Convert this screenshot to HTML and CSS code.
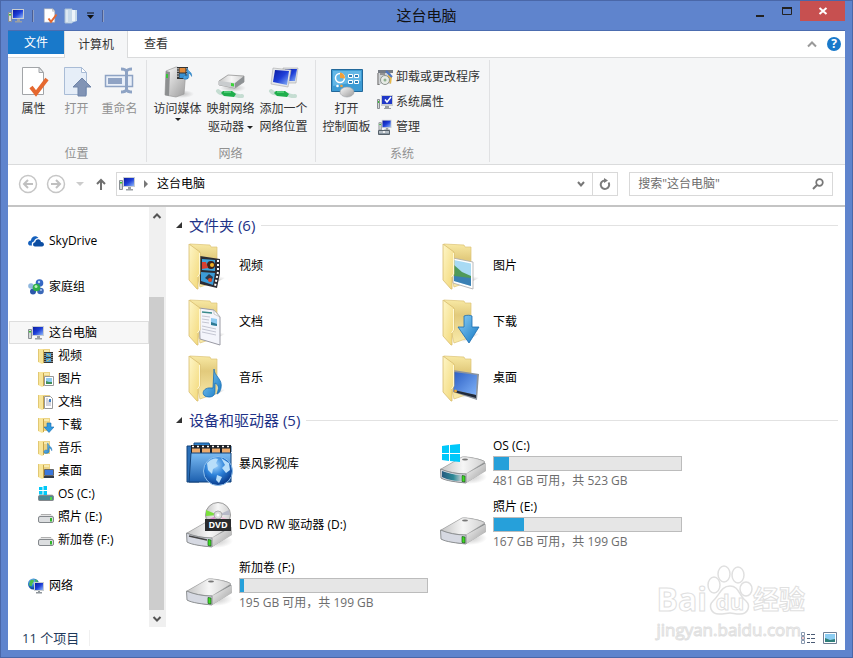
FILE: index.html
```html
<!DOCTYPE html>
<html lang="zh-CN">
  <head>
    <meta charset="UTF-8">
    <meta name="viewport" content="width=device-width, initial-scale=1.0">
    <title>这台电脑</title>
    <link rel="stylesheet" href="styles.css">
  </head>
  <body>
    <!-- shared icon shapes -->
    <svg class="defs" width="0" height="0" aria-hidden="true">
      <defs>
        <linearGradient id="gFront" x1="0" y1="0" x2="1" y2="1">
          <stop offset="0" stop-color="#fef6c8"/><stop offset="1" stop-color="#f2d775"/>
        </linearGradient>
        <linearGradient id="gBack" x1="0" y1="0" x2="0" y2="1">
          <stop offset="0" stop-color="#f8e9a4"/><stop offset=".35" stop-color="#e2ca7c"/><stop offset="1" stop-color="#f9ebab"/>
        </linearGradient>
        <linearGradient id="gBlue" x1="0" y1="0" x2="1" y2="1">
          <stop offset="0" stop-color="#8fd0f5"/><stop offset="1" stop-color="#1177c4"/>
        </linearGradient>
        <linearGradient id="gScreen" x1="0" y1="0" x2="1" y2="1">
          <stop offset="0" stop-color="#0a1aa0"/><stop offset=".5" stop-color="#1e3fd8"/><stop offset="1" stop-color="#8fb8f8"/>
        </linearGradient>
        <linearGradient id="gMetal" x1="0" y1="0" x2="1" y2="1">
          <stop offset="0" stop-color="#fafafa"/><stop offset="1" stop-color="#9b9b9b"/>
        </linearGradient>
        <linearGradient id="gTop" x1="0" y1="0" x2="1" y2="0">
          <stop offset="0" stop-color="#c4c4c4"/><stop offset=".5" stop-color="#f6f6f6"/><stop offset="1" stop-color="#cfcfcf"/>
        </linearGradient>
        <linearGradient id="gDesk" x1="0" y1="0" x2="1" y2="1">
          <stop offset="0" stop-color="#2c5fc4"/><stop offset="1" stop-color="#7fb2f8"/>
        </linearGradient>
        <linearGradient id="gBox" x1="0" y1="0" x2="0" y2="1">
          <stop offset="0" stop-color="#7bbcf4"/><stop offset="1" stop-color="#1c5fae"/>
        </linearGradient>
        <linearGradient id="gTeal" x1="0" y1="0" x2="1" y2="0">
          <stop offset="0" stop-color="#255a80"/><stop offset=".6" stop-color="#2d8a96"/><stop offset="1" stop-color="#b8c8cc"/>
        </linearGradient>
        <radialGradient id="gGlobe" cx=".4" cy=".3" r=".7">
          <stop offset="0" stop-color="#a6d8ff"/><stop offset=".5" stop-color="#2b80d8"/><stop offset="1" stop-color="#0a3b8c"/>
        </radialGradient>
        <radialGradient id="gShade">
          <stop offset="0" stop-color="#888" stop-opacity=".5"/><stop offset="1" stop-color="#888" stop-opacity="0"/>
        </radialGradient>
      </defs>

      <symbol id="pc" viewBox="0 0 16 16">
        <path d="M4 1h12v10H4z" fill="#c9ced2"/>
        <path d="M5 2h10v8H5z" fill="url(#gScreen)"/>
        <path d="M9 11h3v2h2v1.500H7V13h2z" fill="#9a9fa3"/>
        <path d="M.5 4.500h3v9h-3z" fill="#d3d6d8" stroke="#8a8f93"/>
        <path d="M1 6h2v1.500H1z" fill="#35c232"/>
      </symbol>

      <symbol id="check-page" viewBox="-3 0 32 32">
        <path d="M1.500 1.500h17l4 5v22h-21z" fill="#fff" stroke="#a2a5a8"/>
        <path d="M18 1.500v5h4.500z" fill="#e6e8ea" stroke="#a2a5a8"/>
        <path d="M10 21l5 6.500L26 13" fill="none" stroke="#e5682f" stroke-width="4"/>
      </symbol>
      <symbol id="open-page" viewBox="0 0 32 32">
        <path d="M3.500 1.500h17l5 5v22h-22z" fill="#e6eef8" stroke="#a9bcd6"/>
        <path d="M20.500 1.500v5h5z" fill="#fff" stroke="#a9bcd6"/>
        <path d="M21 12l9 9h-5v9h-8v-9h-5z" fill="#8194b5" stroke="#6f84a8"/>
      </symbol>
      <symbol id="rename" viewBox="0 0 32 32">
        <path d="M1.500 9.500h27v11h-27z" fill="#e9eff8" stroke="#8ea3c4" stroke-width="1.500"/>
        <path d="M4 12h14v6H4z" fill="#8fa3c4"/>
        <path d="M17 3c3 0 5 1 5.500 2.500C23 4 25 3 28 3M22.500 5v19M17 26c3 0 5-1 5.500-2.500 .5 1.500 2.500 2.500 5.500 2.500" fill="none" stroke="#8ea3c4" stroke-width="3"/>
      </symbol>
      <symbol id="doc-blue" viewBox="0 0 16 16">
        <path d="M1 1h7v14H1z" fill="#dce8f2" stroke="#aabfd4"/>
        <path d="M4 2h9v11l-6 2H4z" fill="#c6d9ea"/>
        <path d="M8 2h3v11H8z" fill="#edf4fa"/>
      </symbol>

      <symbol id="note" viewBox="0 0 16 16">
        <path d="M8 1c0 4 6 4 5 10-1-3-3-4-3.500-4v5c0 3-7 3.500-7 .5 0-2.500 3.500-3 5-2V1z" fill="url(#gBlue)" stroke="#1b72b8" stroke-width=".6"/>
      </symbol>
      <symbol id="media" viewBox="0 0 32 32">
        <ellipse cx="20" cy="28" rx="12" ry="4" fill="url(#gShade)"/>
        <path d="M4 5l10-4 10 2-2 25-8 3-11-2z" fill="url(#gMetal)" stroke="#9a9a9a" stroke-width=".7"/>
        <path d="M4 5l4 1-1 24-4-1z" fill="#8d8f90"/>
        <path d="M4 8h2v4H4z" fill="#38c53a"/>
        <path d="M15 1h11v12H15z" fill="#333"/>
        <path d="M17.500 2h6v4.500h-6z" fill="#e08a3a"/><path d="M17.500 7.500h6V12h-6z" fill="#3a90d0"/>
        <path d="M16 2v10M25 2v10" stroke="#fff" stroke-dasharray="1.500 1"/>
        <use href="#note" x="19" y="0" width="13" height="16"/>
      </symbol>

      <symbol id="cable" viewBox="0 0 32 32">
        <path d="M3 23c4 5 8 1 12 2s7 4 12 3" fill="none" stroke="#c5ddd2" stroke-width="4" stroke-linecap="round"/>
        <path d="M8 23h9l4 3-2 3-10-1-3-3z" fill="#1fae4c"/>
        <path d="M9 24h7" stroke="#7be59a"/>
      </symbol>
      <symbol id="net-drive" viewBox="0 0 32 32">
        <ellipse cx="18" cy="22" rx="13" ry="4" fill="url(#gShade)"/>
        <path d="M4 15l9-6 16 1v6l-9 6-16-3z" fill="url(#gTop)" stroke="#888" stroke-width=".7"/>
        <path d="M4 15l16 2v5L4 19z" fill="#c9ccce"/><path d="M20 17l9-7v6l-9 6z" fill="#8d9194"/>
        <path d="M16 17l3 .5v3l-3-.5z" fill="#39d437"/>
        <use href="#cable" width="32" height="32" y="2"/>
      </symbol>
      <symbol id="net-place" viewBox="0 0 32 32">
        <path d="M15 2l15 0-2 15-13 0z" fill="#dfe3e6" stroke="#aaa" stroke-width=".6"/>
        <path d="M17 3l12 0-2 12-10 0z" fill="url(#gScreen)"/>
        <path d="M5 2l18 2-3 17-17-3z" fill="#e4e7ea" stroke="#aaa" stroke-width=".6"/>
        <path d="M7 4l14 1-2 14-14-3z" fill="url(#gScreen)"/>
        <use href="#cable" width="32" height="32" y="2"/>
      </symbol>

      <symbol id="panel" viewBox="0 0 32 32">
        <path d="M.5 3.500h31v22H.5z" fill="#3c9bd4" stroke="#23699b"/>
        <path d="M2 5h28v10L2 20z" fill="#63b7e6"/>
        <circle cx="9" cy="12" r="4.500" fill="none" stroke="#fff" stroke-width="1.500"/>
        <path d="M9 12V6.500a5.500 5.500 0 0 1 5 6z" fill="#f2a03b"/>
        <path d="M17.500 8.500h4v3h-4zM23.500 8.500h4v3h-4zM17.500 14.500h4v3h-4zM23.500 14.500h4v3h-4z" fill="#2e7fb8" stroke="#fff"/>
        <circle cx="6.500" cy="20" r="1.300" fill="#fff"/><circle cx="10.500" cy="20" r="1.300" fill="#f2a03b"/>
        <ellipse cx="16" cy="26" rx="7" ry="5" fill="url(#gMetal)" stroke="#9aa0a5" stroke-width=".6"/>
      </symbol>
      <symbol id="uninstall" viewBox="0 0 16 16">
        <path d="M1 1h15v3H1z" fill="#777d84"/><path d="M2 4h12v11H2z" fill="#cfd2d5"/>
        <path d="M1 4v12h2M3 5h5" fill="none" stroke="#555"/>
        <path d="M11 3l4 5-1 7-3-3z" fill="#e8b94a"/><path d="M9 2l6 6" stroke="#4a74c4" stroke-width="2"/>
        <circle cx="8" cy="11" r="4.500" fill="#e7ebe6" stroke="#8d9490"/><circle cx="8" cy="11" r="1.500" fill="#8fb08f"/>
      </symbol>
      <symbol id="sysprops" viewBox="0 0 16 16">
        <path d="M4 1h12v11H4z" fill="#c9ced2"/><path d="M5 2h10v8H5z" fill="#2038c8"/>
        <path d="M8 5.500L10 8l4-5" fill="none" stroke="#fff" stroke-width="1.500"/>
        <path d="M8 12h4v2h2v1H7v-1h1z" fill="#9a9fa3"/>
        <path d="M.5 5.500h2v9h-2z" fill="#d3d6d8" stroke="#8a8f93"/><path d="M1 7h1v2H1z" fill="#35c232"/>
      </symbol>
      <symbol id="manage" viewBox="0 0 16 16">
        <use href="#pc" width="16" height="13"/>
        <path d="M1.500 11.500h11v4h-11z" fill="#8b98a3" stroke="#56616a"/>
        <path d="M2 13h10" stroke="#dfe4e8"/><path d="M6 12h2v2H6z" fill="#eee"/>
      </symbol>

      <symbol id="skydrive" viewBox="0 0 16 16">
        <path d="M1.500 12.500C-1 11 0 7.500 3 7.500 3 3.500 8 1.500 10.500 5 8 5 6.500 6.500 6 8.500c-2 .3-2.800 2.300-1.800 4z" fill="#1460bd"/>
        <path d="M7 13.500c-2.500 0-2.700-4 .2-4.200C7.500 5.500 12.500 5 13 9c3.500-.3 4 4.500 1 4.500z" fill="#0c4da2"/>
      </symbol>
      <symbol id="homegroup" viewBox="0 0 16 16">
        <circle cx="3" cy="7" r="2.800" fill="#8fb7de"/><circle cx="11.500" cy="4" r="3.800" fill="#3568c4"/>
        <circle cx="12.500" cy="12" r="3.300" fill="#3c69b8"/><circle cx="5" cy="12.500" r="3" fill="#2c58ac"/>
        <circle cx="8.500" cy="8.500" r="3.800" fill="#2fae4a"/>
        <circle cx="8" cy="7.500" r="1.500" fill="#b8f0b4"/><circle cx="11" cy="3" r="1.200" fill="#b8d2f6"/><circle cx="13" cy="11" r="1" fill="#a8c6f0"/>
      </symbol>
      <symbol id="network" viewBox="0 0 16 16">
        <circle cx="5.500" cy="6" r="5.500" fill="url(#gGlobe)"/>
        <path d="M2 3c2-2 4-1 4 0S4 5 4 7 2 8 1 7zM7 1l3 2-2 2z" fill="#4fc04c"/>
        <path d="M6 4h10v9H6z" fill="#c9ced2"/><path d="M7 5h8v7H7z" fill="url(#gScreen)"/>
        <path d="M10 13h2v1h2v1.500H8V14h2z" fill="#8f969b"/>
      </symbol>

      <!-- small folders -->
      <symbol id="sf" viewBox="0 0 16 16">
        <path d="M4 1h8v13H5z" fill="#ecd384"/><path d="M5 2h6v2H5z" fill="#f6e9ae"/>
        <path d="M0 1h4l2 1v13l-2 1-4-2z" fill="#f8e59a"/><path d="M5.500 2v13" stroke="#c7a549"/>
        <path d="M.5 1v13" stroke="#e2c873"/>
      </symbol>
      <symbol id="s-video" viewBox="0 0 16 16">
        <use href="#sf" width="16" height="16"/><path d="M6 4h9v11H6z" fill="#333"/>
        <path d="M8 5h5v4H8zM8 10h5v4H8z" fill="#4a9fd4"/><path d="M9 6l3 2M9 13l3-2" stroke="#e8c25a"/>
        <path d="M7 5v10M14 5v10" stroke="#ddd" stroke-dasharray="1 1"/>
      </symbol>
      <symbol id="s-picture" viewBox="0 0 16 16">
        <use href="#sf" width="16" height="16"/><path d="M6.500 5.500h9v9h-9z" fill="#fff" stroke="#999"/>
        <path d="M8 7h6v6H8z" fill="#8fcbee"/><path d="M8 10l3 1 3 0v2H8z" fill="#3f8f5a"/>
      </symbol>
      <symbol id="s-doc" viewBox="0 0 16 16">
        <use href="#sf" width="16" height="16"/><path d="M6.500 2.500h6l2 2v10h-8z" fill="#fff" stroke="#999"/>
        <path d="M8 5h2M8 7h5M8 9h5M8 11h5" stroke="#aab"/><path d="M11 5h2v3h-2z" fill="#3f7fc4"/>
      </symbol>
      <symbol id="s-down" viewBox="0 0 16 16">
        <use href="#sf" width="16" height="16"/>
        <path d="M9 6h4v4h3l-5 5.500L6 10h3z" fill="#2e9ae0" stroke="#1b6db0" stroke-width=".6"/>
      </symbol>
      <symbol id="s-music" viewBox="0 0 16 16">
        <use href="#sf" width="16" height="16"/><use href="#note" x="4" y="2" width="12" height="13"/>
      </symbol>
      <symbol id="s-desk" viewBox="0 0 16 16">
        <use href="#sf" width="16" height="16"/><path d="M6.500 6.500h9v6h-9z" fill="#3b78dc" stroke="#666"/>
        <path d="M6 13h10v2H6z" fill="#333c48"/>
      </symbol>
      <symbol id="s-drive" viewBox="0 0 16 16">
        <path d="M3 5h10l3 3v5H0V8z" fill="#e5e5e5"/>
        <rect x=".5" y="7.500" width="15" height="6" rx="1.500" fill="#dcdee0" stroke="#84888c"/>
        <path d="M3 5.500h10" stroke="#b0b0b0"/><path d="M12 9h2v3.500h-2z" fill="#31b72c"/>
      </symbol>
      <symbol id="s-os" viewBox="0 0 16 16">
        <path d="M2 8h12l2 2v5H0v-5z" fill="#dcdcdc"/>
        <rect x=".5" y="9.500" width="15" height="5" rx="1.500" fill="#4a8794" stroke="#84888c"/>
        <path d="M12 11h2v3h-2z" fill="#52d648"/>
        <path d="M1 1h3.500v3H1zM5.500 0H9v4H5.500zM1 5h3.500v3.500H1zM5.500 5H9v4H5.500z" fill="#00c8f8"/>
      </symbol>

      <!-- large folders -->
      <symbol id="folder" viewBox="0 0 48 48">
        <path d="M20 46l24-12-10 0z" fill="url(#gShade)"/>
        <path d="M5 2l20 1 1 2h6v34l-17 6z" fill="url(#gBack)" stroke="#dcc376" stroke-width=".7"/>
      </symbol>
      <symbol id="flap" viewBox="0 0 48 48">
        <path d="M4 2l11 8v22l-2 3v12h-1l-8-9z" fill="url(#gFront)" stroke="#d8bd6e" stroke-width=".8"/>
        <path d="M14.500 11v21l-2 3" fill="none" stroke="#fff8d4"/>
      </symbol>
      <symbol id="f-video" viewBox="0 0 48 48">
        <use href="#folder" width="48" height="48"/>
        <path d="M15 14l20 3v14l-3 15-17-4z" fill="#2c2c34"/>
        <path d="M17 17l13 1v11l-13-1z" fill="#3ca4dc"/><path d="M16 30l14 1-2 12-12-4z" fill="#3c9cd8"/>
        <circle cx="26" cy="23" r="4" fill="#402218"/><circle cx="27" cy="23" r="2" fill="#f0b428"/>
        <path d="M17 20h4l2 6-6 1z" fill="#d84030"/><path d="M20 36l4-4 4 3-2 5z" fill="#2a3a50"/><circle cx="25" cy="38" r="2" fill="#e04824"/>
        <path d="M33 18v12l-3 14" fill="none" stroke="#fff" stroke-width="2" stroke-dasharray="2 2"/>
        <use href="#flap" width="48" height="48"/>
      </symbol>
      <symbol id="f-picture" viewBox="0 0 48 48">
        <use href="#folder" width="48" height="48"/>
        <path d="M14 16l20 4v27l-20-6z" fill="#fff" stroke="#aaa" stroke-width=".8"/>
        <path d="M15 18l17 3.500V44l-17-5z" fill="#a8daf4"/>
        <path d="M15 23l8 7 9 4v3l-17 0z" fill="#4f9a5a"/><path d="M15 34l17 2v8l-17-5z" fill="#3a80b4"/>
        <use href="#flap" width="48" height="48"/>
      </symbol>
      <symbol id="f-doc" viewBox="0 0 48 48">
        <use href="#folder" width="48" height="48"/>
        <path d="M14 10l15 2 6 7v28l-20-6z" fill="#f4f5fb" stroke="#9a9aa4"/>
        <path d="M29 12l0 4 6 3z" fill="#fff" stroke="#aaa" stroke-width=".6"/>
        <path d="M17 14l10 1" stroke="#3a8a8a" stroke-width="1.500"/>
        <path d="M17 18l8 1M17 21l7 1M17 24l7 1M17 28l14 3M17 31l14 3M17 34l14 3" stroke="#c4c6d2"/>
        <path d="M26 20l6 1v7l-6-1z" fill="#8ecaf0"/><path d="M26 24l6 2v2l-6-1z" fill="#2e7a94"/>
        <use href="#flap" width="48" height="48"/>
      </symbol>
      <symbol id="f-down" viewBox="0 0 48 48">
        <use href="#folder" width="48" height="48"/><use href="#flap" width="48" height="48"/>
        <path d="M25 18c3-1 6-1 8 0v11h7L30 45 19 29l6 0z" fill="url(#gBlue)" stroke="#1a6cb0" stroke-width=".8"/>
      </symbol>
      <symbol id="f-music" viewBox="0 0 48 48">
        <use href="#folder" width="48" height="48"/><use href="#flap" width="48" height="48"/>
        <path d="M29 15c0 7 9 10 7 19-1 4-2 5-4 6 2-6 2-9-2-11v8c0 4-2 6-6 6-9 0-7-10 2-9l2 0z" fill="url(#gBlue)" stroke="#1b6fb4" stroke-width=".8"/>
      </symbol>
      <symbol id="f-desk" viewBox="0 0 48 48">
        <use href="#folder" width="48" height="48"/>
        <path d="M14 16l26 4-2 26-24-8z" fill="#8d949c"/>
        <path d="M15 18l23 3-1 20-22-5z" fill="url(#gDesk)"/><path d="M15 36l22 5v3l-22-6z" fill="#202a3a"/>
        <circle cx="16.500" cy="37" r="1.500" fill="#e8a83a"/>
        <use href="#flap" width="48" height="48"/>
      </symbol>

      <!-- large drives -->
      <symbol id="drive" viewBox="0 0 48 48">
        <ellipse cx="30" cy="37" rx="18" ry="7" fill="url(#gShade)"/>
        <path d="M2 29l21-12c3-1 20 2 22 4l2 4-1 6-19 12C20 43 5 40 2 38z" fill="#84888a"/>
        <path d="M2 29l21-12c3-1 20 2 23 5L27 34C20 34 7 32 2 29z" fill="url(#gTop)" stroke="#a0a0a0" stroke-width=".6"/>
        <path d="M27 34l20-11v8L27 43z" fill="url(#gMetal)"/>
        <path d="M1.500 29c7 3 16 5 25.500 5v9C18 42 7 41 2 38z" fill="#d6d9e2" stroke="#8f9294"/>
        <path d="M23 35.500l3 .5v6l-3-.5z" fill="#3ddc22" stroke="#1a5a18" stroke-width=".7"/>
        <ellipse cx="26" cy="19.500" rx="3" ry="1" fill="#777"/>
      </symbol>
      <symbol id="drive-os" viewBox="0 0 48 48">
        <use href="#drive" width="48" height="48"/>
        <path d="M3 31c6 2 12 4 19 4v6C14 41 7 39 3 37z" fill="url(#gTeal)"/>
        <path d="M3 6l7-1v8H3zM11 5l10-1v9H11zM3 14h7v7l-7-1zM11 14h10v8l-10-1z" fill="#00c8fa"/>
      </symbol>
      <symbol id="drive-dvd" viewBox="0 0 48 48">
        <use href="#drive" width="48" height="48" y="3"/>
        <path d="M4 35l18 4" stroke="#444" stroke-width="1.500"/>
        <circle cx="33" cy="14" r="12.500" fill="url(#gTop)" stroke="#9b9b9b"/>
        <path d="M33 14L21 9l0 6z" fill="#7ae03c"/><path d="M33 14l11-5 1 5z" fill="#b7b9c8"/><path d="M33 14l-11 5 3 5z" fill="#e08ad0"/><path d="M33 14l11 5-2 3z" fill="#f2c0dc"/>
        <circle cx="33" cy="14" r="4" fill="#ddd" stroke="#aaa"/><circle cx="33" cy="14" r="1.500" fill="#fff"/>
        <path d="M20 18h26v12H20z" fill="#2a2b2d"/>
      </symbol>
      <symbol id="library" viewBox="0 0 48 48">
        <path d="M9 5V3h15l1 3h21v6H9z" fill="#2f83cf" stroke="#154c85"/>
        <path d="M2 6h12v36H2z" fill="#2a6fb8" stroke="#12427a"/>
        <path d="M6 5h40v8H6z" fill="#1d2127"/><path d="M7 6.500h38" stroke="#fff" stroke-width="1.500" stroke-dasharray="2 3"/>
        <path d="M7 8.500h8v5H7zM17 8.500h8v5h-8zM27 8.500h8v5h-8zM37 8.500h8v5h-8z" fill="#ecaa6c"/>
        <path d="M6 13h40v29H4z" fill="url(#gBox)" stroke="#12427a"/>
        <circle cx="33" cy="31" r="14.500" fill="url(#gGlobe)" stroke="#8fc0ec"/>
        <path d="M22 23c5-5 9-5 11-4l-2 4 2 3-5 3-1 5-4-4zM36 18l8 5 1 7-4 3-4-5 3-3zM32 35l5 2-3 6-3-3z" fill="#b8defa"/>
      </symbol>
    </svg>

    <div class="window">
      <header class="titlebar">
        <div class="quick">
          <svg class="i16"><use href="#pc"/></svg>
          <span class="bar"></span>
          <button aria-label="属性"><svg class="i16"><use href="#check-page"/></svg></button>
          <button aria-label="新建"><svg class="i16"><use href="#doc-blue"/></svg></button>
          <button aria-label="自定义"><svg class="i8" viewBox="0 0 8 8"><path d="M1 1h7" stroke="#111"/><path d="M1 3h7L4.500 7z" fill="#111"/></svg></button>
          <span class="bar"></span>
        </div>
        <h1>这台电脑</h1>
        <div class="controls">
          <button aria-label="最小化"><svg viewBox="0 0 12 12"><path d="M2 10h8v2H2z" fill="#222"/></svg></button>
          <button aria-label="最大化"><svg viewBox="0 0 12 12"><path d="M1.500 2.500h9v7h-9z" fill="none" stroke="#222"/><path d="M1 2h10v2H1z" fill="#222"/></svg></button>
          <button class="close" aria-label="关闭"><svg viewBox="0 0 12 12"><path d="M2.500 3l7 6M9.500 3l-7 6" stroke="#fff" stroke-width="2"/></svg></button>
        </div>
      </header>

      <div class="frame">
        <nav class="tabs">
          <button class="file">文件</button>
          <button class="tab active">计算机</button>
          <button class="tab">查看</button>
          <div class="tabs-right">
            <button aria-label="折叠功能区"><svg class="i12" viewBox="0 0 12 12"><path d="M2 8.500l4-4 4 4" fill="none" stroke="#999" stroke-width="2"/></svg></button>
            <button class="help" aria-label="帮助">?</button>
          </div>
        </nav>

        <section class="ribbon">
          <div class="group">
            <div class="tools">
              <button class="tool narrow"><svg class="i32"><use href="#check-page"/></svg>属性</button>
              <button class="tool narrow" disabled><svg class="i32"><use href="#open-page"/></svg>打开</button>
              <button class="tool narrow" disabled><svg class="i32"><use href="#rename"/></svg>重命名</button>
            </div>
            <div class="caption">位置</div>
          </div>
          <div class="group">
            <div class="tools">
              <button class="tool"><svg class="i32"><use href="#media"/></svg>访问媒体<span class="caret"></span></button>
              <button class="tool"><svg class="i32"><use href="#net-drive"/></svg>映射网络<span>驱动器 <span class="caret"></span></span></button>
              <button class="tool"><svg class="i32"><use href="#net-place"/></svg>添加一个<span>网络位置</span></button>
            </div>
            <div class="caption">网络</div>
          </div>
          <div class="group">
            <div class="tools">
              <button class="tool"><svg class="i32"><use href="#panel"/></svg>打开<span>控制面板</span></button>
              <div class="stack">
                <button><svg class="i16"><use href="#uninstall"/></svg>卸载或更改程序</button>
                <button><svg class="i16"><use href="#sysprops"/></svg>系统属性</button>
                <button><svg class="i16"><use href="#manage"/></svg>管理</button>
              </div>
            </div>
            <div class="caption">系统</div>
          </div>
        </section>

        <div class="address-row">
          <button aria-label="后退"><svg class="i20" viewBox="0 0 20 20"><circle cx="10" cy="10" r="8.500" fill="none" stroke="#c6c6c6" stroke-width="1.500"/><path d="M15 10H6M10 6l-4 4 4 4" fill="none" stroke="#c0c0c0" stroke-width="2"/></svg></button>
          <button aria-label="前进"><svg class="i20" viewBox="0 0 20 20"><circle cx="10" cy="10" r="8.500" fill="none" stroke="#c6c6c6" stroke-width="1.500"/><path d="M5 10h9M10 6l4 4-4 4" fill="none" stroke="#c0c0c0" stroke-width="2"/></svg></button>
          <button aria-label="最近位置"><svg class="i12" viewBox="0 0 12 12"><path d="M2 4h8L6 8z" fill="#ccc"/></svg></button>
          <button class="up" aria-label="上移"><svg class="i12" viewBox="0 0 12 12"><path d="M6 12V2M2 6l4-4 4 4" fill="none" stroke="#6f6f6f" stroke-width="2"/></svg></button>
          <div class="address">
            <svg class="i16"><use href="#pc"/></svg>
            <svg class="i12" viewBox="0 0 12 12"><path d="M4 2l4 4-4 4z" fill="#777"/></svg>
            <button class="crumb">这台电脑</button>
            <button aria-label="历史记录"><svg class="i12" viewBox="0 0 12 12"><path d="M3 4l3 3.500L9 4" fill="none" stroke="#777" stroke-width="2"/></svg></button>
            <button class="refresh" aria-label="刷新"><svg class="i12" viewBox="0 0 12 12"><path d="M9.500 4.500A4.200 4.200 0 1 1 6 2.500" fill="none" stroke="#7a7a7a" stroke-width="2"/><path d="M5 0l4 2.500L5 5z" fill="#7a7a7a"/></svg></button>
          </div>
          <div class="search">
            <input type="search" aria-label="搜索" placeholder='搜索"这台电脑"'>
            <svg class="i12" viewBox="0 0 12 12"><circle cx="7.500" cy="4.500" r="3.300" fill="none" stroke="#777" stroke-width="1.700"/><path d="M5 7l-4 4" stroke="#777" stroke-width="2"/></svg>
          </div>
        </div>

        <div class="body">
          <aside class="sidebar">
            <ul class="tree">
              <li><a href="#"><svg class="i16"><use href="#skydrive"/></svg>SkyDrive</a></li>
              <li><a href="#"><svg class="i16"><use href="#homegroup"/></svg>家庭组</a></li>
              <li>
                <a href="#" class="selected"><svg class="i16"><use href="#pc"/></svg>这台电脑</a>
                <ul>
                  <li><a href="#"><svg class="i16"><use href="#s-video"/></svg>视频</a></li>
                  <li><a href="#"><svg class="i16"><use href="#s-picture"/></svg>图片</a></li>
                  <li><a href="#"><svg class="i16"><use href="#s-doc"/></svg>文档</a></li>
                  <li><a href="#"><svg class="i16"><use href="#s-down"/></svg>下载</a></li>
                  <li><a href="#"><svg class="i16"><use href="#s-music"/></svg>音乐</a></li>
                  <li><a href="#"><svg class="i16"><use href="#s-desk"/></svg>桌面</a></li>
                  <li><a href="#"><svg class="i16"><use href="#s-os"/></svg>OS (C:)</a></li>
                  <li><a href="#"><svg class="i16"><use href="#s-drive"/></svg>照片 (E:)</a></li>
                  <li><a href="#"><svg class="i16"><use href="#s-drive"/></svg>新加卷 (F:)</a></li>
                </ul>
              </li>
              <li><a href="#"><svg class="i16"><use href="#network"/></svg>网络</a></li>
            </ul>
            <div class="scrollbar">
              <button aria-label="向上滚动"><svg class="i12" viewBox="0 0 12 12"><path d="M2.500 8L6 4.500 9.500 8" fill="none" stroke="#555" stroke-width="2"/></svg></button>
              <div class="track"><div class="thumb"></div></div>
              <button aria-label="向下滚动"><svg class="i12" viewBox="0 0 12 12"><path d="M2.500 4L6 7.500 9.500 4" fill="none" stroke="#555" stroke-width="2"/></svg></button>
            </div>
          </aside>

          <main class="content">
            <h2><svg class="i8" viewBox="0 0 8 8"><path d="M7 1v6H1z" fill="#333"/></svg>文件夹 (6)</h2>
            <div class="grid folders">
              <div class="item"><svg class="i48"><use href="#f-video"/></svg>视频</div>
              <div class="item"><svg class="i48"><use href="#f-picture"/></svg>图片</div>
              <div class="item"><svg class="i48"><use href="#f-doc"/></svg>文档</div>
              <div class="item"><svg class="i48"><use href="#f-down"/></svg>下载</div>
              <div class="item"><svg class="i48"><use href="#f-music"/></svg>音乐</div>
              <div class="item"><svg class="i48"><use href="#f-desk"/></svg>桌面</div>
            </div>
            <h2><svg class="i8" viewBox="0 0 8 8"><path d="M7 1v6H1z" fill="#333"/></svg>设备和驱动器 (5)</h2>
            <div class="grid drives">
              <div class="item"><svg class="i48"><use href="#library"/></svg>暴风影视库</div>
              <div class="item">
                <svg class="i48"><use href="#drive-os"/></svg>
                <div class="info">
                  <div>OS (C:)</div>
                  <div class="usage"><div class="used" style="width: 8%"></div></div>
                  <div class="free">481 GB 可用，共 523 GB</div>
                </div>
              </div>
              <div class="item"><svg class="i48" viewBox="0 0 48 48"><use href="#drive-dvd" width="48" height="48"/><text class="disc" x="33" y="27">DVD</text></svg>DVD RW 驱动器 (D:)</div>
              <div class="item">
                <svg class="i48"><use href="#drive"/></svg>
                <div class="info">
                  <div>照片 (E:)</div>
                  <div class="usage"><div class="used" style="width: 16%"></div></div>
                  <div class="free">167 GB 可用，共 199 GB</div>
                </div>
              </div>
              <div class="item">
                <svg class="i48"><use href="#drive"/></svg>
                <div class="info">
                  <div>新加卷 (F:)</div>
                  <div class="usage"><div class="used" style="width: 2%"></div></div>
                  <div class="free">195 GB 可用，共 199 GB</div>
                </div>
              </div>
            </div>
          </main>
        </div>

        <footer class="status">
          <span class="count">11 个项目</span>
          <div class="views">
            <button aria-label="详细信息"><svg class="i16" viewBox="0 0 16 16"><path d="M1.500 2.500h3v3h-3zM1.500 6.500h3v3h-3zM1.500 10.500h3v3h-3z" fill="#fff" stroke="#8a9ab0"/><path d="M7 4.500h3M11 4.500h4M7 8.500h3M11 8.500h4M7 12.500h3M11 12.500h4" stroke="#4a5a74"/><path d="M2.500 7.500h1v1h-1z" fill="#c33"/></svg></button>
            <button aria-label="大图标"><svg class="i16" viewBox="0 0 16 16"><path d="M1.500 2.500h13v11h-13z" fill="#fff" stroke="#6f8096"/><path d="M3 4h10v8H3z" fill="#8ccdf2"/><path d="M3 8l5 2 5-1v3H3z" fill="#2f7f7a"/></svg></button>
          </div>
        </footer>
      </div>

      <div class="watermark" aria-hidden="true">
        <div class="brand">
          <span>Bai</span>
          <div class="paw">
            <svg viewBox="0 0 46 50"><g fill="#fff" stroke="#e0e0e0" stroke-width="1.500"><ellipse cx="7" cy="20" rx="6" ry="8"/><ellipse cx="17" cy="9" rx="6" ry="8"/><ellipse cx="31" cy="10" rx="6" ry="8"/><ellipse cx="39" cy="24" rx="6" ry="7"/><path d="M23 21c9 0 9 10 16 15 5 5 2 13-6 13-5 0-7-1-10-1s-6 1-11 1C4 49 1 41 6 36c6-5 8-15 17-15z"/></g></svg>
            <span>du</span>
          </div>
          <span>经验</span>
        </div>
        <div class="site">jingyan.baidu.com</div>
      </div>
    </div>
  </body>
</html>
```
FILE: styles.css
```css
* {
  box-sizing: border-box;
}

body {
  margin: 0;
  font-family: "Open Sans", "Noto Sans CJK SC", sans-serif;
  font-size: 12px;
  line-height: 16px;
  color: #000;
}

button {
  border: none;
  background: none;
  padding: 0;
  margin: 0;
  font: inherit;
  color: inherit;
  display: flex;
  align-items: center;
  justify-content: center;
}

a {
  color: inherit;
  text-decoration: none;
}

ul {
  list-style: none;
  margin: 0;
  padding: 0;
}

svg {
  flex: none;
  display: block;
}

.defs {
  position: absolute;
}

.i8 { width: 8px; height: 8px; }
.i12 { width: 12px; height: 12px; }
.i16 { width: 16px; height: 16px; }
.i20 { width: 20px; height: 20px; }
.i32 { width: 32px; height: 32px; }
.i48 { width: 48px; height: 48px; }

/* window and title bar */
.window {
  position: relative;
  display: flex;
  flex-direction: column;
  min-height: 100vh;
  padding: 0 7px 7px;
  background: #5f84cd;
  border: 1px solid #4a67a8;
}

.titlebar {
  display: grid;
  grid-template-columns: 1fr auto 1fr;
  height: 29px;
}

.titlebar h1 {
  margin: 0;
  font-size: 15px;
  font-weight: normal;
  line-height: 29px;
  color: #111;
}

.quick {
  display: flex;
  align-items: center;
  gap: 6px;
}

.quick .bar {
  width: 2px;
  height: 12px;
  margin: 0 2px;
  background: #8f9fc4;
  border-left: 1px solid #4a5f96;
}

.controls {
  display: flex;
  justify-content: flex-end;
  align-items: flex-start;
}

.controls button {
  width: 27px;
  height: 20px;
}

.controls svg {
  width: 12px;
  height: 12px;
}

.controls .close {
  width: 45px;
  background: #c75050;
}

.frame {
  flex: 1;
  display: flex;
  flex-direction: column;
  background: #fff;
  border-top: 1px solid #4c6db0;
}

/* tabs */
.tabs {
  display: flex;
  height: 27px;
  border-bottom: 1px solid #dadbdc;
}

.file {
  width: 56px;
  height: 23px;
  background: #1979ca;
  color: #fff;
}

.tab {
  width: 56px;
  height: 26px;
  color: #333;
}

.tab.active {
  width: 64px;
  height: 27px;
  background: #f5f6f7;
  border: 1px solid #dadbdc;
  border-width: 0 1px;
}

.tabs-right {
  display: flex;
  align-items: center;
  gap: 9px;
  margin-left: auto;
  padding-right: 4px;
}

.help {
  width: 14px;
  height: 14px;
  border-radius: 50%;
  background: #1979ca;
  color: #fff;
  font-weight: bold;
}

/* ribbon */
.ribbon {
  display: flex;
  height: 107px;
  padding: 2px 0;
  background: #f5f6f7;
  border-bottom: 1px solid #dadbdc;
  color: #333;
}

.group {
  display: flex;
  flex-direction: column;
  justify-content: space-between;
  padding: 4px 5px 0 4px;
  border-right: 1px solid #e0e1e3;
}

.tools {
  display: flex;
}

.tool {
  flex-direction: column;
  justify-content: flex-start;
  width: 53px;
  padding-top: 2px;
  line-height: 18px;
  white-space: nowrap;
}

.tool svg {
  margin-bottom: 2px;
}

.tool.narrow {
  width: 43px;
}

.tool:disabled {
  color: #919191;
}

.tool span {
  display: block;
}

.tool .caret {
  display: inline-block;
  border: 3px solid transparent;
  border-top-color: #222;
  border-bottom: 0;
  vertical-align: middle;
}

.stack {
  display: flex;
  flex-direction: column;
  padding: 0 4px;
}

.stack button {
  justify-content: flex-start;
  gap: 3px;
  height: 25px;
  white-space: nowrap;
}

.caption {
  text-align: center;
  color: #919191;
}

/* address bar */
.address-row {
  display: flex;
  align-items: center;
  gap: 8px;
  height: 42px;
  padding: 0 12px 2px 10px;
  border-bottom: 2px solid #c4c4c4;
}

.up {
  width: 14px;
}

.address {
  flex: 1;
  display: flex;
  align-items: center;
  height: 24px;
  padding-left: 2px;
  border: 1px solid #d9d9d9;
  gap: 5px;
}

.address .crumb {
  margin-right: auto;
}

.address .refresh {
  width: 25px;
  height: 22px;
  border-left: 1px solid #d9d9d9;
}

.search {
  display: flex;
  align-items: center;
  width: 25%;
  height: 24px;
  margin-left: 3px;
  padding: 0 8px;
  border: 1px solid #d9d9d9;
}

.search input {
  flex: 1;
  min-width: 0;
  border: none;
  outline: none;
  padding: 0;
  font: inherit;
}

.search input::placeholder {
  color: #6d6d6d;
}

/* navigation tree */
.body {
  flex: 1;
  display: flex;
}

.sidebar {
  display: flex;
  width: 158px;
  padding-left: 1px;
  border-right: 1px solid #f0f0f0;
}

.tree {
  flex: 1;
  display: flex;
  flex-direction: column;
  gap: 23px;
  padding: 22px 0 30px;
}

.tree a {
  display: flex;
  align-items: center;
  gap: 5px;
  height: 23px;
  padding-left: 18px;
  border: 1px solid transparent;
}

.tree ul a {
  gap: 4px;
  padding-left: 28px;
}

.tree .selected {
  background: #f7f7f7;
  border-color: #dedede;
}

.scrollbar {
  display: flex;
  flex-direction: column;
  width: 16px;
  background: #f0f0f0;
}

.scrollbar button {
  height: 17px;
}

.track {
  flex: 1;
  display: flex;
  align-items: flex-end;
}

.thumb {
  width: 15px;
  height: 81%;
  background: #cdcdcd;
}

/* file list */
.content {
  flex: 1;
  padding: 8px 7px 0 9px;
}

.content h2 {
  display: flex;
  align-items: center;
  gap: 6px;
  height: 20px;
  margin: 0 0 3px;
  font-size: 15px;
  font-weight: normal;
  color: #1e3287;
}

.content h2::after {
  content: "";
  flex: 1;
  height: 1px;
  background: #e2e2e2;
}

.grid {
  display: grid;
  grid-template-columns: repeat(auto-fill, 254px);
  padding-left: 10px;
}

.folders {
  grid-auto-rows: 56px;
  margin-bottom: 4px;
}

.drives {
  grid-auto-rows: 61px;
}

.item {
  display: flex;
  align-items: center;
  gap: 6px;
}

.info {
  display: flex;
  flex-direction: column;
  gap: 2px;
}

.usage {
  width: 189px;
  height: 15px;
  background: #e6e6e6;
  border: 1px solid #bcbcbc;
}

.used {
  height: 100%;
  background: #26a0da;
}

.free {
  color: #6d6d6d;
}

.disc {
  font-size: 9px;
  font-weight: bold;
  text-anchor: middle;
  fill: #fff;
}

/* status bar */
.status {
  display: flex;
  align-items: center;
  justify-content: space-between;
  height: 23px;
  padding: 0 7px 2px 14px;
  color: #1e395b;
}

.count {
  padding-right: 10px;
  border-right: 1px solid #f0f0f0;
  font-size: 13px;
}

.views {
  display: flex;
  gap: 6px;
}

/* watermark laid over the file list */
.watermark {
  position: absolute;
  right: 47px;
  bottom: 17px;
  color: #fff;
  -webkit-text-stroke: 1px #e0e0e0;
  pointer-events: none;
}

.brand {
  display: flex;
  align-items: flex-end;
  margin-bottom: 5px;
  font-size: 32px;
  font-weight: bold;
  line-height: 32px;
}

.brand > span:last-child {
  font-size: 26px;
}

.paw {
  position: relative;
  width: 46px;
  height: 50px;
}

.paw svg {
  width: 46px;
  height: 50px;
}

.paw span {
  position: absolute;
  left: 0;
  right: 0;
  bottom: 2px;
  font-size: 22px;
  line-height: 24px;
  text-align: center;
}

.site {
  font-size: 17px;
  line-height: 20px;
}
```
